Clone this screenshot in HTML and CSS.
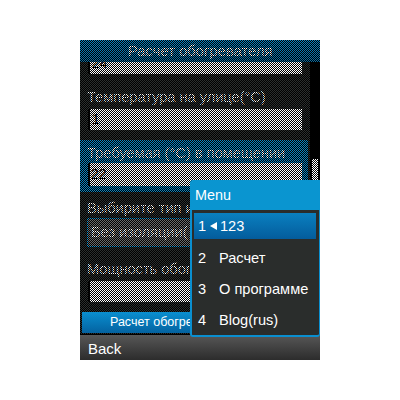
FILE: index.html
```html
<!DOCTYPE html>
<html lang="ru">
<head>
<meta charset="utf-8">
<title>Расчет обогревателя</title>
<link rel="stylesheet" href="styles.css">
</head>
<body>
<div class="screen">
  <div class="under">
    <div class="title">Расчет обогревателя</div>
    <div class="body">
      <div class="form">
        <div class="input cut"><span class="val">24</span></div>
        <div class="field outside"><div class="label">Температура на улице(°C)</div><div class="input"><span class="val">1</span></div></div>
        <div class="field focus"><div class="label">Требуемая (°C) в помещении</div><div class="input active"><span class="val sel">22</span></div></div>
        <div class="field kind"><div class="label">Выбирите тип изоляции</div><div class="select">Без изоляции(</div></div>
        <div class="field power"><div class="label">Мощность обогревателя</div><div class="input"></div></div>
        <div class="button">Расчет обогревателя</div>
      </div>
      <div class="scrollbar"><div class="thumb"></div></div>
    </div>
    <svg class="dither" width="240" height="294" shape-rendering="crispEdges" aria-hidden="true">
      <defs>
        <pattern id="checker" width="2" height="2" patternUnits="userSpaceOnUse">
          <rect x="1" y="0" width="1" height="1" fill="#000"/>
          <rect x="0" y="1" width="1" height="1" fill="#000"/>
        </pattern>
      </defs>
      <rect width="240" height="294" fill="url(#checker)"/>
    </svg>
  </div>
  <div class="softkeys">Back</div>
  <div class="menu">
    <div class="menu-head">Menu</div>
    <div class="menu-list">
      <div class="item current"><span class="num">1</span><svg class="arrow" viewBox="0 0 7 8" width="7" height="8"><path d="M0 4 7 0V8Z" fill="#fff"/></svg><span>123</span></div>
      <div class="item"><span class="num wide">2</span><span>Расчет</span></div>
      <div class="item"><span class="num wide">3</span><span>О программе</span></div>
      <div class="item"><span class="num wide">4</span><span>Blog(rus)</span></div>
    </div>
  </div>
</div>
</body>
</html>
```
FILE: styles.css
```css
html, body { margin: 0; padding: 0; background: #fff; }
body { font-family: "Liberation Sans", Arial, sans-serif; color: #fff; }
.screen { position: relative; width: 240px; height: 320px; margin: 40px 0 0 80px; background: #000; overflow: hidden; }
.under { position: relative; height: 294px; overflow: hidden; }
.title { height: 22px; line-height: 22px; text-align: center; font-size: 14.8px; background: linear-gradient(#0a84c2, #086ca3); }
.body { display: flex; height: 272px; }
.form { width: 230px; background: #2b2f2e; display: flex; flex-direction: column; }
.field { padding: 0 8px 0 7px; }
.label { font-size: 14.6px; line-height: 16px; height: 16px; white-space: nowrap; overflow: hidden; color: #fff; }
.input { height: 21px; margin: 4px 0 0 3px; background: #fff; box-shadow: -2px 0 #000; color: #000; font-size: 14px; line-height: 21px; overflow: hidden; }
.cut { height: 12px; line-height: 2px; margin: 0 8px 0 10px; }
.val { display: inline-block; color: #000; padding-left: 2px; }
.outside { margin-top: 15px; }
.focus { background: #0a84c2; margin: 10px 2px 0 0; padding: 5px 6px 6px 7px; }
.active { height: 23px; line-height: 23px; margin-top: 2px; }
.sel { padding: 0 1px; }
.kind { margin-top: 8px; }
.select { height: 27px; line-height: 27px; margin-top: 2px; border: 1px solid #0a8fd0; background: #6a6a6a; padding-left: 3px; font-size: 14.6px; white-space: nowrap; overflow: hidden; }
.power { margin-top: 14px; }
.button { position: relative; z-index: 1; height: 21px; line-height: 21px; margin: 10px 0 0 2px; padding-left: 28px; font-size: 12.5px; white-space: nowrap; background: linear-gradient(#0a8fd0, #0462a0); }
.scrollbar { width: 10px; background: #000; padding: 97px 2px 0; box-sizing: border-box; }
.thumb { width: 6px; height: 26px; background: #fff; }
.dither { position: absolute; left: 0; top: 0; }
.softkeys { position: relative; z-index: 1; height: 25px; margin-top: 1px; line-height: 27px; padding-left: 8px; font-size: 15px; background: linear-gradient(#575757, #2c2c2c); }
.menu { position: absolute; z-index: 2; left: 110px; top: 140px; width: 130px; height: 155px; display: flex; flex-direction: column; }
.menu-head { height: 30px; line-height: 30px; padding-left: 5px; font-size: 14.4px; background: #0a95d0; border-radius: 3px 0 0 0; }
.menu-list { flex: 1; background: #2a2d2c; border: 2px solid #0a8fd0; border-width: 0 1px 2px 2px; border-radius: 0 0 3px 3px; padding: 3px 3px 0 2px; display: flex; flex-direction: column; }
.item { height: 31px; flex: none; display: flex; align-items: center; font-size: 14.6px; padding-left: 4px; }
.current { height: 26px; margin-bottom: 3px; background: linear-gradient(#0a80c0, #045c9c); }
.num { width: 10px; }
.wide { width: 21px; }
.arrow { margin: 0 3px 0 2px; }
```
